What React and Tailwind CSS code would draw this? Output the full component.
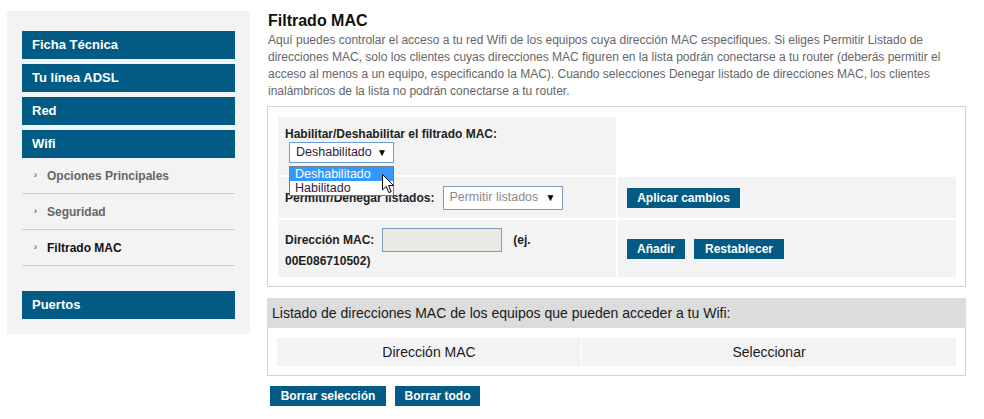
import React from "react";

const navBtn =
  "h-[28px] flex items-center pl-[10px] bg-[#015b85] text-white text-[13px] font-bold";
const actionBtn =
  "h-[20px] flex items-center justify-center bg-[#015b85] text-white text-[12px] font-bold";

const Sidebar = () => {
  const top = ["Ficha Técnica", "Tu línea ADSL", "Red", "Wifi"];
  const sub = [
    { label: "Opciones Principales", active: false },
    { label: "Seguridad", active: false },
    { label: "Filtrado MAC", active: true },
  ];

  return (
    <aside className="ml-[7px] mt-[11px] w-[243px] h-[323px] shrink-0 bg-[#f3f3f3] px-[15px] pt-[20px]">
      <div className="flex flex-col gap-[5px]">
        {top.map((item) => (
          <div key={item} className={navBtn}>
            {item}
          </div>
        ))}
      </div>
      <ul>
        {sub.map((s) => (
          <li
            key={s.label}
            className="h-[36px] border-b border-[#cccccc] flex items-center pl-[12px] text-[12px] font-bold"
          >
            <span className="inline-block w-[13px] text-[9px] text-[#666666]">›</span>
            <span className={s.active ? "text-[#111111]" : "text-[#666666]"}>
              {s.label}
            </span>
          </li>
        ))}
      </ul>
      <div className={"mt-[25px] " + navBtn}>Puertos</div>
    </aside>
  );
};

// pointer shown over the open dropdown
const Cursor = () => (
  <svg width="13" height="20" viewBox="0 0 13 20" className="absolute left-[93px] top-[32px]">
    <path
      d="M0.5 0.5 L0.5 16 L4.2 12.4 L6.8 18.6 L9.2 17.6 L6.6 11.6 L11.5 11.6 Z"
      fill="#ffffff"
      stroke="#000000"
      strokeWidth="1"
      strokeLinejoin="round"
    />
  </svg>
);

const FilterPanel = () => (
  <div className="mt-[6px] border border-[#d4d4d4] pl-[10px] pr-[9px] pt-[10px] pb-[9px]">
    <div className="grid grid-cols-[338px_338px] gap-[2px] text-[12px] font-bold text-[#222222]">
      {/* row 1 */}
      <div className="h-[58px] bg-[#f3f3f3] pl-[7px] pt-[10px]">
        <div className="leading-[14px]">Habilitar/Deshabilitar el filtrado MAC:</div>
        <div className="relative ml-[4px] mt-[1px] w-[105px]">
          <div className="h-[21px] border border-[#6a9fd8] bg-white flex items-center justify-between pl-[6px] pr-[6px] font-normal text-[12.5px] text-[#301a40]">
            <span>Deshabilitado</span>
            <span className="text-[10px] text-black">▼</span>
          </div>
          <div className="absolute left-0 top-[24px] w-[105px] border border-[#7a7a7a] bg-white font-normal text-[12.5px] z-10">
            <div className="h-[14px] leading-[14px] pl-[5px] bg-[#3399ff] text-white">Deshabilitado</div>
            <div className="h-[14px] leading-[14px] pl-[5px] text-[#301a40]">Habilitado</div>
          </div>
          <div className="absolute inset-0 z-20 pointer-events-none">
            <Cursor />
          </div>
        </div>
      </div>
      <div className="h-[58px]" />

      {/* row 2 */}
      <div className="h-[41px] bg-[#f3f3f3] pl-[7px] flex items-center">
        <span>Permitir/Denegar listados:</span>
        <div className="ml-[9px] w-[120px] h-[24px] border border-[#7f9db9] bg-white flex items-center justify-between pl-[5px] pr-[7px] font-normal text-[12.5px] text-[#8a8a8a]">
          <span>Permitir listados</span>
          <span className="text-[10px] text-black">▼</span>
        </div>
      </div>
      <div className="h-[41px] bg-[#f3f3f3] pl-[9px] flex items-center">
        <button className={"w-[113px] " + actionBtn}>Aplicar cambios</button>
      </div>

      {/* row 3 */}
      <div className="h-[57px] bg-[#f3f3f3] pl-[7px] pt-[8px]">
        <div className="flex items-center">
          <span>Dirección MAC:</span>
          <div className="ml-[8px] w-[120px] h-[24px] border border-[#7f9db9] bg-[#ebe9e3]" />
          <span className="ml-[11px]">(ej.</span>
        </div>
        <div className="mt-[2px] leading-[14px]">00E086710502)</div>
      </div>
      <div className="h-[57px] bg-[#f3f3f3] pl-[9px] flex items-center gap-[9px]">
        <button className={"w-[58px] " + actionBtn}>Añadir</button>
        <button className={"w-[90px] " + actionBtn}>Restablecer</button>
      </div>
    </div>
  </div>
);

const MacList = () => (
  <div className="mt-[11px]">
    <div className="h-[30px] bg-[#dcdcdc] flex items-center pl-[5px] text-[14px] text-[#1a1a1a]">
      Listado de direcciones MAC de los equipos que pueden acceder a tu Wifi:
    </div>
    <div className="border-x border-b border-[#d4d4d4] pl-[9px] pr-[9px] pt-[10px] pb-[9px]">
      <div className="grid grid-cols-[304px_374px] gap-[1px] text-[14px] text-[#1a1a1a]">
        <div className="h-[28px] bg-[#f3f3f3] flex items-center justify-center">Dirección MAC</div>
        <div className="h-[28px] bg-[#f3f3f3] flex items-center justify-center">Seleccionar</div>
      </div>
    </div>
    <div className="mt-[10px] ml-[3px] flex gap-[9px]">
      <button className={"w-[116px] " + actionBtn}>Borrar selección</button>
      <button className={"w-[85px] " + actionBtn}>Borrar todo</button>
    </div>
  </div>
);

export default function App() {
  return (
    <div className="w-[984px] h-[419px] overflow-hidden bg-white flex font-['Liberation_Sans',Arial,sans-serif]">
      <Sidebar />
      <main className="ml-[17px] w-[699px] pt-[12px]">
        <h1 className="pl-[1px] text-[16px] leading-[18px] font-bold text-[#111111]">Filtrado MAC</h1>
        <p className="pl-[1px] mt-[2px] text-[12px] leading-[17px] text-[#666666]">
          Aquí puedes controlar el acceso a tu red Wifi de los equipos cuya dirección MAC
          especifiques. Si eliges Permitir Listado de direcciones MAC, solo los clientes cuyas
          direcciones MAC figuren en la lista podrán conectarse a tu router (deberás permitir el
          acceso al menos a un equipo, especificando la MAC). Cuando selecciones Denegar listado de
          direcciones MAC, los clientes inalámbricos de la lista no podrán conectarse a tu router.
        </p>
        <FilterPanel />
        <MacList />
      </main>
    </div>
  );
}
